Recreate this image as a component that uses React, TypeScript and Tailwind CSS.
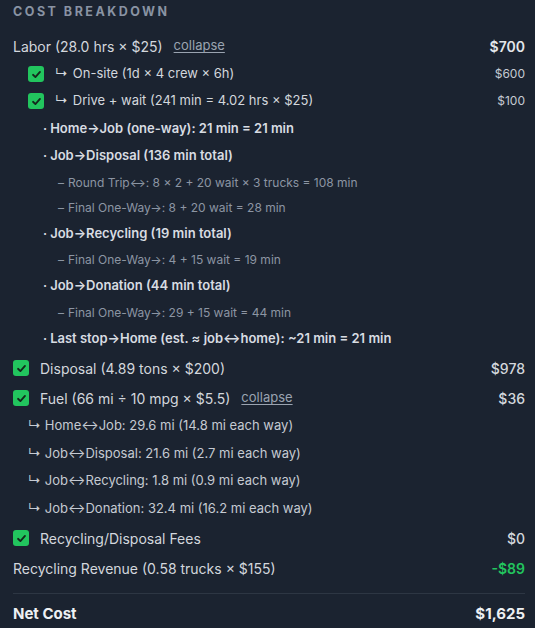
import React from "react";

const Check = ({ className = "" }: { className?: string }) => (
  <span className={`flex h-[16px] w-[16px] shrink-0 items-center justify-center rounded-[3px] bg-[#22c55e] ${className}`}>
    <svg width="11" height="11" viewBox="0 0 12 12" fill="none">
      <path d="M2.2 6.3 L4.8 8.8 L9.8 3.2" stroke="#14281c" strokeWidth="2" strokeLinecap="round" strokeLinejoin="round" />
    </svg>
  </span>
);

const Bold = ({ children, mt }: { children: React.ReactNode; mt: string }) => (
  <div className={`flex h-[24px] items-center pl-[30px] text-[13px] font-semibold text-[#d8dce2] ${mt}`}>
    <span className="mr-[3px]">·</span>
    {children}
  </div>
);

const Sub = ({ children, mt }: { children: React.ReactNode; mt: string }) => (
  <div className={`flex h-[24px] items-center pl-[45px] text-[12px] text-[#8c95a3] ${mt}`}>
    <span className="mr-[4px]">–</span>
    {children}
  </div>
);

const Fuel = ({ children, mt }: { children: React.ReactNode; mt: string }) => (
  <div className={`flex h-[24px] items-center pl-[15px] text-[13px] text-[#c5cad2] ${mt}`}>
    <span className="mr-[4px]">↳</span>
    {children}
  </div>
);

export default function App() {
  return (
    <div
      className="min-h-[628px] w-[535px] bg-[#1b2330] pl-[13px] pr-[10px] pt-[4px]"
      style={{ fontFamily: "Inter, 'Noto Sans', sans-serif" }}
    >
      <div className="flex h-[16px] items-center text-[12.5px] font-bold tracking-[0.2em] text-[#8993a3]">COST BREAKDOWN</div>

      <div className="mt-[14px] flex h-[24px] items-center justify-between text-[14px] text-[#d3d7dd]">
        <div className="flex items-center">
          <span>Labor (28.0 hrs × $25)</span>
          <span className="ml-[11px] text-[13px] text-[#9aa3b0] underline underline-offset-2">collapse</span>
        </div>
        <span className="font-semibold text-[#e3e6ea]">$700</span>
      </div>

      <div className="mt-[4px] flex h-[24px] items-center justify-between text-[13px] text-[#d3d7dd]">
        <div className="flex items-center pl-[15px]">
          <Check />
          <span className="ml-[11px] mr-[5px]">↳</span>
          <span>On-site (1d × 4 crew × 6h)</span>
        </div>
        <span className="text-[12px] text-[#c5cad2]">$600</span>
      </div>

      <div className="mt-[3px] flex h-[24px] items-center justify-between text-[13px] text-[#d3d7dd]">
        <div className="flex items-center pl-[15px]">
          <Check />
          <span className="ml-[11px] mr-[5px]">↳</span>
          <span>Drive + wait (241 min = 4.02 hrs × $25)</span>
        </div>
        <span className="text-[12px] text-[#c5cad2]">$100</span>
      </div>

      <Bold mt="mt-[4px]">Home→Job (one-way): 21 min = 21 min</Bold>
      <Bold mt="mt-[3px]">Job→Disposal (136 min total)</Bold>
      <Sub mt="mt-[3px]">Round Trip↔: 8 × 2 + 20 wait × 3 trucks = 108 min</Sub>
      <Sub mt="mt-[1px]">Final One-Way→: 8 + 20 wait = 28 min</Sub>
      <Bold mt="mt-[2px]">Job→Recycling (19 min total)</Bold>
      <Sub mt="mt-[2px]">Final One-Way→: 4 + 15 wait = 19 min</Sub>
      <Bold mt="mt-[2px]">Job→Donation (44 min total)</Bold>
      <Sub mt="mt-[3px]">Final One-Way→: 29 + 15 wait = 44 min</Sub>
      <Bold mt="mt-[2px]">Last stop→Home (est. ≈ job↔home): ~21 min = 21 min</Bold>

      <div className="mt-[5px] flex h-[24px] items-center justify-between text-[14px] text-[#d3d7dd]">
        <div className="flex items-center">
          <Check />
          <span className="ml-[11px]">Disposal (4.89 tons × $200)</span>
        </div>
        <span className="font-medium text-[#d3d7dd]">$978</span>
      </div>

      <div className="mt-[6px] flex h-[24px] items-center justify-between text-[14px] text-[#d3d7dd]">
        <div className="flex items-center">
          <Check />
          <span className="ml-[11px]">Fuel (66 mi ÷ 10 mpg × $5.5)</span>
          <span className="ml-[11px] text-[13px] text-[#9aa3b0] underline underline-offset-2">collapse</span>
        </div>
        <span className="font-medium text-[#d3d7dd]">$36</span>
      </div>

      <Fuel mt="mt-[4px]">Home↔Job: 29.6 mi (14.8 mi each way)</Fuel>
      <Fuel mt="mt-[4px]">Job↔Disposal: 21.6 mi (2.7 mi each way)</Fuel>
      <Fuel mt="mt-[3px]">Job↔Recycling: 1.8 mi (0.9 mi each way)</Fuel>
      <Fuel mt="mt-[4px]">Job↔Donation: 32.4 mi (16.2 mi each way)</Fuel>

      <div className="mt-[5px] flex h-[24px] items-center justify-between text-[14px] text-[#d3d7dd]">
        <div className="flex items-center">
          <Check />
          <span className="ml-[11px]">Recycling/Disposal Fees</span>
        </div>
        <span className="font-medium text-[#d3d7dd]">$0</span>
      </div>

      <div className="mt-[6px] flex h-[24px] items-center justify-between text-[14px] text-[#d3d7dd]">
        <span>Recycling Revenue (0.58 trucks × $155)</span>
        <span className="font-semibold text-[#22c55e]">-$89</span>
      </div>

      <div className="mt-[13px] h-px bg-[#2d3643]" />

      <div className="mt-[8px] flex h-[24px] items-center justify-between text-[15px] font-bold text-[#eef0f3]">
        <span>Net Cost</span>
        <span>$1,625</span>
      </div>
    </div>
  );
}
